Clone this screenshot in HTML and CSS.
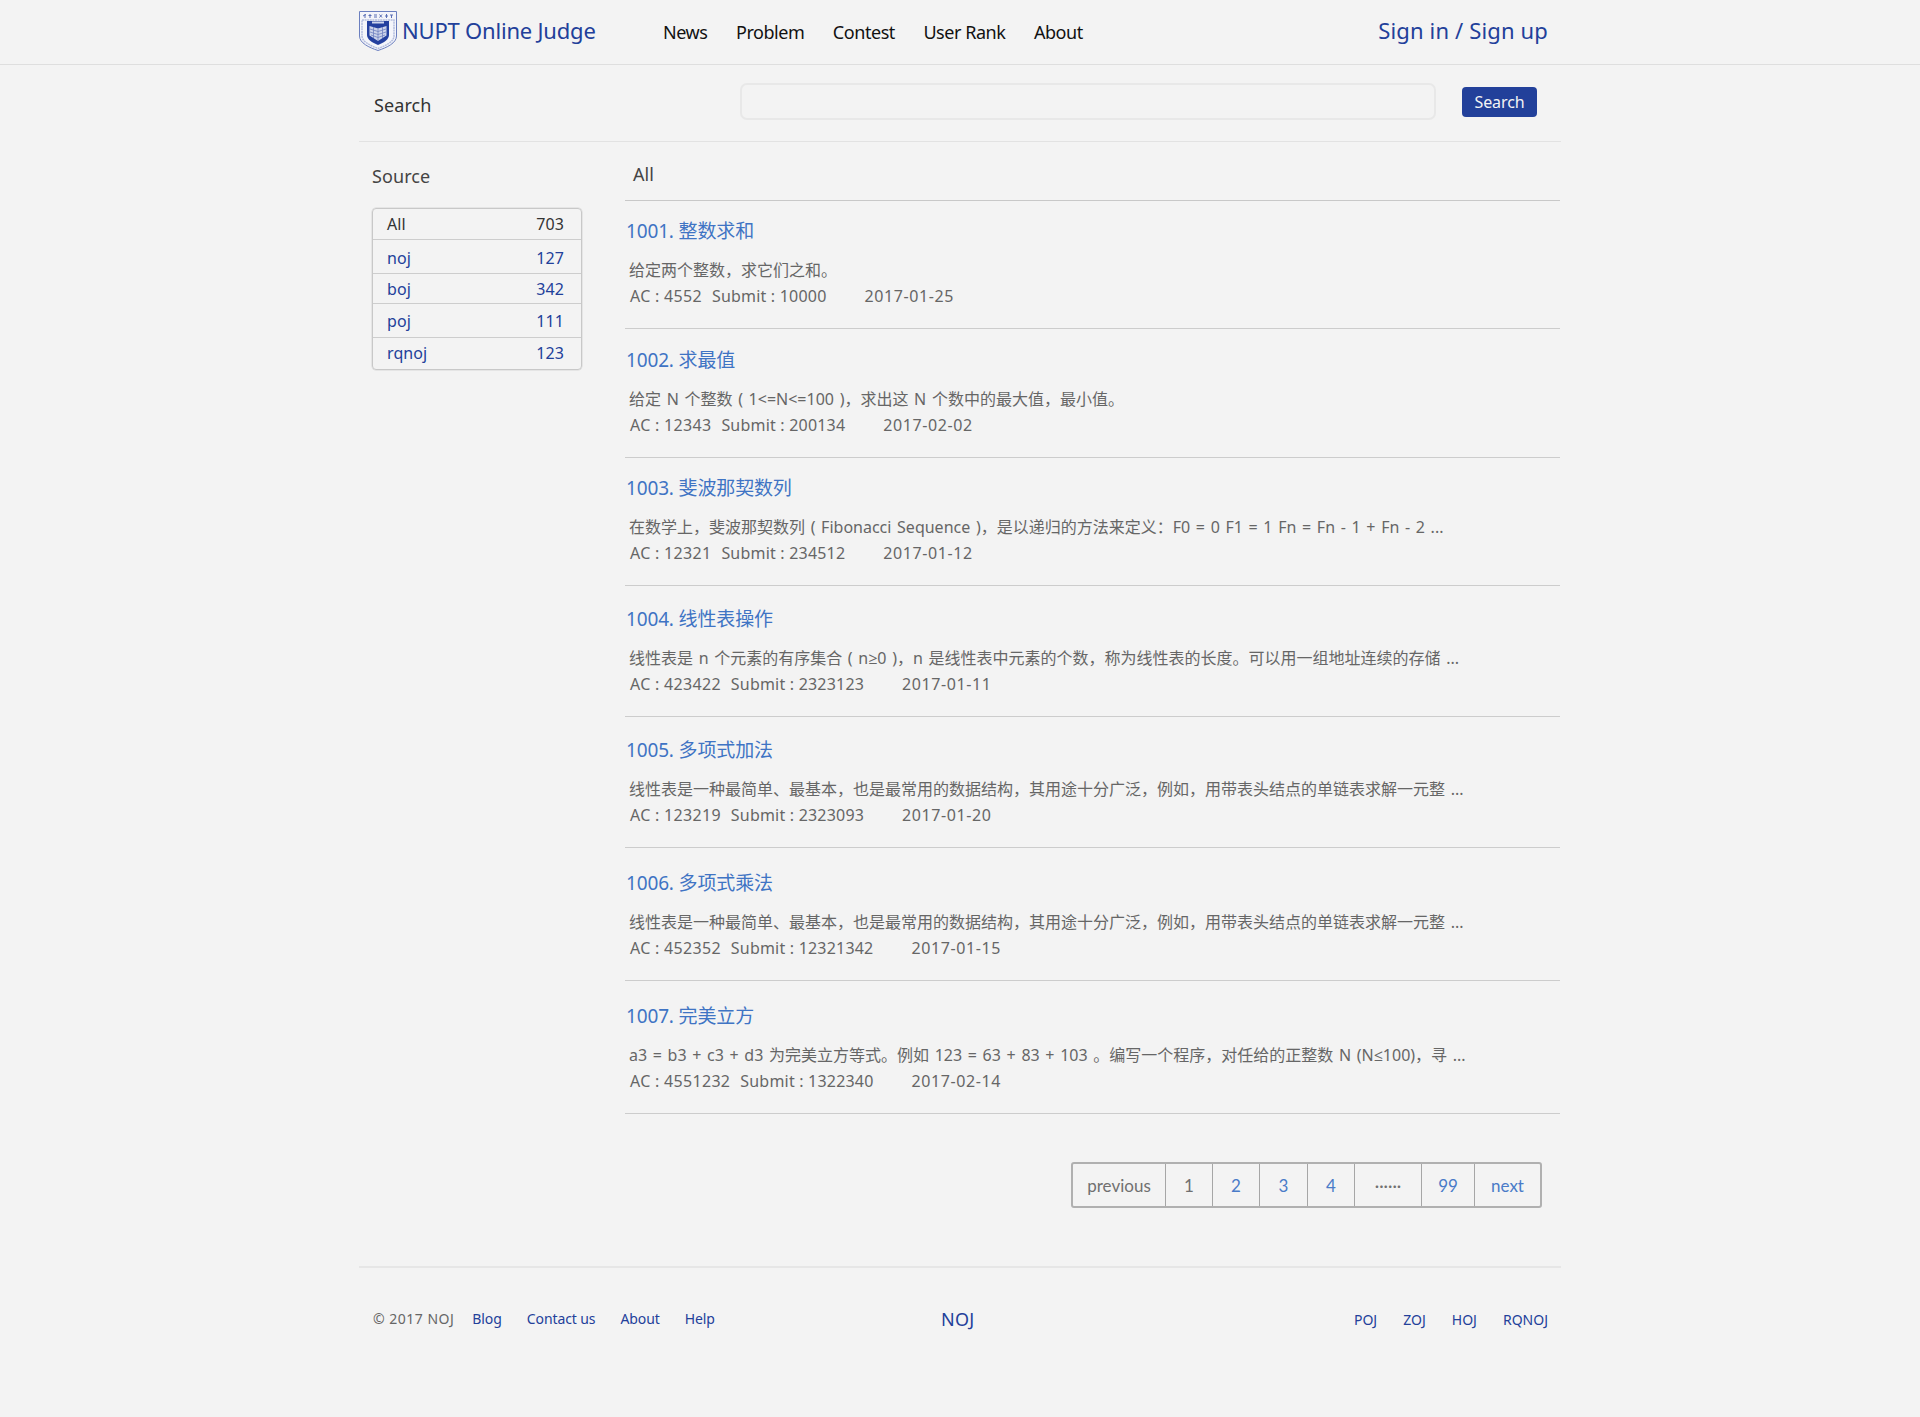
FILE: index.html
```html
<!DOCTYPE html>
<html lang="zh">
<head>
<meta charset="utf-8">
<title>NUPT Online Judge</title>
<link rel="stylesheet" href="styles.css">
</head>
<body>
<header class="topbar">
  <div class="wrap topbar-in">
    <a class="brand" href="#">
      <svg class="logo" viewBox="0 0 38 40" width="38" height="40" aria-hidden="true">
        <path d="M.5.5H37.500V25C37.500 32 28 36.500 19 39.500C10 36.500 .5 32 .5 25Z" fill="#f4f5fa" stroke="#6b7fbf" stroke-width="1"/>
        <path d="M3 9H35V25C35 30.500 27 34.500 19 37.500C11 34.500 3 30.500 3 25Z" fill="none" stroke="#b4bede" stroke-width="1.500" stroke-dasharray="2 .6"/>
        <path d="M8 10H30V24C30 28.500 25 31.500 19 34C13 31.500 8 28.500 8 24Z" fill="#24409f"/>
        <rect x="13" y="10.500" width="12" height="2" fill="#cfd6ec"/>
        <path d="M10.500 15L19 17.500L27.500 15V24.500L19 30L10.500 24.500Z" fill="#ccd3ea"/>
        <path d="M11 18L19 20.500L27 18M11 21L19 23.500L27 21M12 24L19 26.500L26 24M19 18V30M14.500 16V27M23.500 16V27" fill="none" stroke="#7082c0" stroke-width=".8"/>
        <g fill="none" stroke="#5a6fb5" stroke-width="1">
          <path d="M4 5L7 3.500M6 3V7"/><path d="M9.500 4.500H12.500M11 3V7"/><path d="M15 4H18M15 6H18"/><path d="M20.500 3.500L23 6.500M23 3.500L20.500 6.500"/><path d="M26 5H29M27.500 3V7"/><path d="M31 4H34M32.500 4V7"/>
        </g>
      </svg>
      <span class="brand-name">NUPT Online Judge</span>
    </a>
    <nav class="nav">
      <a href="#">News</a>
      <a href="#">Problem</a>
      <a href="#">Contest</a>
      <a href="#">User Rank</a>
      <a href="#">About</a>
    </nav>
    <a class="sign" href="#">Sign in / Sign up</a>
  </div>
</header>

<div class="wrap">
  <section class="searchbar">
    <span class="search-label">Search</span>
    <input class="search-input" type="text" aria-label="Search">
    <button class="search-btn" type="button">Search</button>
  </section>

  <div class="columns">
    <aside class="side">
      <h2 class="side-title">Source</h2>
      <ul class="sources">
        <li class="source current"><span>All</span><span>703</span></li>
        <li class="source"><a href="#">noj</a><a href="#">127</a></li>
        <li class="source"><a href="#">boj</a><a href="#">342</a></li>
        <li class="source"><a href="#">poj</a><a href="#">111</a></li>
        <li class="source"><a href="#">rqnoj</a><a href="#">123</a></li>
      </ul>
    </aside>

    <main class="main">
      <div class="main-head">All</div>
      <div class="problems">
        <article class="problem">
          <h3 class="p-title"><a href="#">1001. 整数求和</a></h3>
          <p class="p-desc">给定两个整数，求它们之和。</p>
          <p class="p-meta"><span>AC : 4552</span><span>Submit : 10000</span><span class="p-date">2017-01-25</span></p>
        </article>
        <article class="problem">
          <h3 class="p-title"><a href="#">1002. 求最值</a></h3>
          <p class="p-desc">给定 N 个整数 ( 1&lt;=N&lt;=100 )，求出这 N 个数中的最大值，最小值。</p>
          <p class="p-meta"><span>AC : 12343</span><span>Submit : 200134</span><span class="p-date">2017-02-02</span></p>
        </article>
        <article class="problem">
          <h3 class="p-title"><a href="#">1003. 斐波那契数列</a></h3>
          <p class="p-desc">在数学上，斐波那契数列 ( Fibonacci Sequence )，是以递归的方法来定义：F0 = 0 F1 = 1 Fn = Fn - 1 + Fn - 2 ...</p>
          <p class="p-meta"><span>AC : 12321</span><span>Submit : 234512</span><span class="p-date">2017-01-12</span></p>
        </article>
        <article class="problem">
          <h3 class="p-title"><a href="#">1004. 线性表操作</a></h3>
          <p class="p-desc">线性表是 n 个元素的有序集合 ( n≥0 )，n 是线性表中元素的个数，称为线性表的长度。可以用一组地址连续的存储 ...</p>
          <p class="p-meta"><span>AC : 423422</span><span>Submit : 2323123</span><span class="p-date">2017-01-11</span></p>
        </article>
        <article class="problem">
          <h3 class="p-title"><a href="#">1005. 多项式加法</a></h3>
          <p class="p-desc">线性表是一种最简单、最基本，也是最常用的数据结构，其用途十分广泛，例如，用带表头结点的单链表求解一元整 ...</p>
          <p class="p-meta"><span>AC : 123219</span><span>Submit : 2323093</span><span class="p-date">2017-01-20</span></p>
        </article>
        <article class="problem">
          <h3 class="p-title"><a href="#">1006. 多项式乘法</a></h3>
          <p class="p-desc">线性表是一种最简单、最基本，也是最常用的数据结构，其用途十分广泛，例如，用带表头结点的单链表求解一元整 ...</p>
          <p class="p-meta"><span>AC : 452352</span><span>Submit : 12321342</span><span class="p-date">2017-01-15</span></p>
        </article>
        <article class="problem">
          <h3 class="p-title"><a href="#">1007. 完美立方</a></h3>
          <p class="p-desc">a3 = b3 + c3 + d3 为完美立方等式。例如 123 = 63 + 83 + 103 。编写一个程序，对任给的正整数 N (N≤100)，寻 ...</p>
          <p class="p-meta"><span>AC : 4551232</span><span>Submit : 1322340</span><span class="p-date">2017-02-14</span></p>
        </article>
      </div>
      <div class="pager-row">
        <div class="pager">
          <span class="pg pg-prev muted">previous</span>
          <span class="pg pg-num muted">1</span>
          <a class="pg pg-num" href="#">2</a>
          <a class="pg pg-num pg-wide" href="#">3</a>
          <a class="pg pg-num" href="#">4</a>
          <span class="pg pg-dots muted">······</span>
          <a class="pg pg-99" href="#">99</a>
          <a class="pg pg-next" href="#">next</a>
        </div>
      </div>
    </main>
  </div>

  <footer class="footer">
    <div class="foot-left">
      <span class="copy">© 2017 NOJ</span>
      <a href="#">Blog</a>
      <a href="#">Contact us</a>
      <a href="#">About</a>
      <a href="#">Help</a>
    </div>
    <a class="foot-mid" href="#">NOJ</a>
    <div class="foot-right">
      <a href="#">POJ</a>
      <a href="#">ZOJ</a>
      <a href="#">HOJ</a>
      <a href="#">RQNOJ</a>
    </div>
  </footer>
</div>
</body>
</html>
```
FILE: styles.css
```css
* { box-sizing: border-box; }
html, body { margin: 0; padding: 0; }
body {
  background: #f3f3f3;
  color: #333;
  font-family: "Noto Sans", "Open Sans", "Noto Sans CJK SC", sans-serif;
  font-size: 16px;
  min-height: 1417px;
}
a { color: #22409a; text-decoration: none; }
ul { list-style: none; margin: 0; padding: 0; }
h2, h3, p { margin: 0; font-weight: 400; }

.wrap { width: 1202px; margin-left: 359px; }

.topbar { height: 65px; border-bottom: 1px solid #dedede; }
.topbar-in { display: flex; align-items: center; height: 64px; position: relative; }
.brand { display: flex; align-items: center; gap: 5px; width: 304px; height: 64px; }
.logo { display: block; flex: none; margin-top: -2px; }
.brand-name { font-size: 22px; letter-spacing: -0.2px; color: #22409a; margin-top: -4px; }
.nav { display: flex; gap: 28.500px; font-size: 18px; margin-top: -1px; }
.nav a { color: #111; letter-spacing: -0.45px; }
.sign { margin-left: auto; margin-right: 13px; font-size: 22px; letter-spacing: 0.15px; color: #22409a; margin-top: -4px; }

.searchbar { display: flex; align-items: center; height: 77px; border-bottom: 1px solid #e2e2e2; padding-left: 15px; }
.search-label { width: 366px; font-size: 18px; color: #333; letter-spacing: 0.1px; margin-top: 4px; }
.search-input { width: 696px; height: 37px; border: 2px solid #e8e8e8; border-radius: 7px; background: #f3f3f3; margin-top: -4px; }
.search-btn { width: 75px; height: 30px; margin-left: 26px; margin-top: -2px; padding: 0; border: 0; border-radius: 4px; background: #22409a; color: #f4f4f4; font-family: inherit; font-size: 16px; letter-spacing: -0.1px; }

.columns { display: flex; }
.side { width: 266px; padding-left: 13px; }
.side-title { font-size: 18px; color: #444; letter-spacing: 0.1px; margin-top: 21px; line-height: 26px; }
.sources { width: 210px; margin-top: 19px; border: 1px solid #c8c8c8; border-radius: 4px; box-shadow: 0 0 0 0.5px #d8d8d8; }
.source { display: flex; justify-content: space-between; align-items: center; height: 31px; padding: 0 17px 0 14px; border-bottom: 1px solid #cdcdcd; font-size: 16px; letter-spacing: 0.1px; }
.source:nth-child(2) { height: 34px; padding-top: 2px; }
.source:nth-child(3) { height: 30px; }
.source:nth-child(4) { height: 34px; }
.source:last-child { border-bottom: 0; height: 31px; padding-bottom: 2px; }
.current { color: #333; }

.main { width: 935px; }
.main-head { height: 59px; padding: 20px 8px 0; font-size: 18px; line-height: 25px; color: #444; border-bottom: 1px solid #c8c8c8; }
.problems { display: grid; grid-template-rows: 128px 129px 128px 131px 131px 133px 133px; }
.problem { display: flex; flex-direction: column; justify-content: flex-end; border-bottom: 1px solid #ccc; padding-bottom: 19px; }
.p-title { font-size: 19px; line-height: 30px; padding-left: 1px; letter-spacing: -0.15px; }
.p-title a { color: #3f74c4; }
.p-desc { margin-top: 11px; padding-left: 4px; font-size: 16px; line-height: 26px; color: #666; letter-spacing: 0; word-spacing: 1.500px; }
.p-meta { display: flex; padding-left: 5px; font-size: 16px; line-height: 26px; color: #666; letter-spacing: 0.3px; }
.p-meta span + span { margin-left: 10px; letter-spacing: 0.2px; }
.p-meta .p-date { margin-left: 38px; letter-spacing: 0.6px; }

.pager-row { display: flex; justify-content: flex-end; padding: 48px 18px 0 0; }
.pager { display: flex; height: 46px; border: 2px solid #b0b0b0; border-radius: 3px; font-family: Lato, "Noto Sans", sans-serif; font-size: 17px; }
.pg { display: flex; align-items: center; justify-content: center; border-left: 1px solid #a6a6a6; color: #4a7bc8; }
.pg:first-child { border-left: 0; }
.pg.muted { color: #707070; }
.pg-prev { width: 92px; }
.pg-num { width: 47px; }
.pg-num.pg-wide { width: 48px; }
.pg-dots { width: 67px; }
.pg-99 { width: 53px; }
.pg-next { width: 66px; }

.footer { display: flex; align-items: center; height: 91px; margin-top: 58px; border-top: 2px solid #e6e6e6; padding: 11px 13px 0 14px; font-size: 14px; }
.foot-left, .foot-right { display: flex; }
.foot-left { width: 568px; }
.foot-left a { margin-left: 25px; letter-spacing: -0.1px; }
.foot-left .copy + a { margin-left: 18px; }
.copy { color: #666; letter-spacing: 0.5px; }
.foot-mid { font-size: 18px; letter-spacing: 0.2px; margin-top: 1px; }
.foot-right { margin-left: auto; margin-top: 2px; }
.foot-right a { margin-left: 26px; letter-spacing: 0; }
```
